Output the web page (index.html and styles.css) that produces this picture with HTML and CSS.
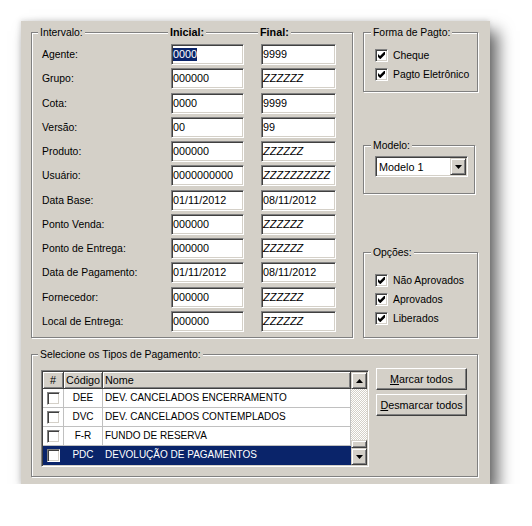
FILE: index.html
```html
<!DOCTYPE html>
<html lang="pt-BR">
<head>
    <meta charset="UTF-8">
    <meta name="viewport" content="width=device-width, initial-scale=1.0">
    <title>Filtro de Pagamentos</title>
    <link rel="stylesheet" href="styles.css">
</head>
<body>
    <div class="dialog">
        <div class="group intervalo">
            <div class="caption-row cols">
                <span class="caption">Intervalo:</span>
                <span class="caption bold">Inicial:</span>
                <span class="caption bold">Final:</span>
            </div>
            <div class="form cols">
                <label>Agente:</label>
                <div class="edit"><span class="sel">0000</span></div>
                <div class="edit">9999</div>

                <label>Grupo:</label>
                <div class="edit">000000</div>
                <div class="edit mask">ZZZZZZ</div>

                <label>Cota:</label>
                <div class="edit">0000</div>
                <div class="edit">9999</div>

                <label>Versão:</label>
                <div class="edit">00</div>
                <div class="edit">99</div>

                <label>Produto:</label>
                <div class="edit">000000</div>
                <div class="edit mask">ZZZZZZ</div>

                <label>Usuário:</label>
                <div class="edit">0000000000</div>
                <div class="edit mask">ZZZZZZZZZZ</div>

                <label>Data Base:</label>
                <div class="edit">01/11/2012</div>
                <div class="edit">08/11/2012</div>

                <label>Ponto Venda:</label>
                <div class="edit">000000</div>
                <div class="edit mask">ZZZZZZ</div>

                <label>Ponto de Entrega:</label>
                <div class="edit">000000</div>
                <div class="edit mask">ZZZZZZ</div>

                <label>Data de Pagamento:</label>
                <div class="edit">01/11/2012</div>
                <div class="edit">08/11/2012</div>

                <label>Fornecedor:</label>
                <div class="edit">000000</div>
                <div class="edit mask">ZZZZZZ</div>

                <label>Local de Entrega:</label>
                <div class="edit">000000</div>
                <div class="edit mask">ZZZZZZ</div>
            </div>
        </div>

        <div class="side">
            <div class="group forma">
                <div class="caption-row"><span class="caption">Forma de Pagto:</span></div>
                <div class="checks">
                    <div class="check-row"><span class="check"><svg width="7" height="7" viewBox="0 0 7 7"><polygon points="0,2 2,4 6,0 7,0 7,2.5 2.5,7 2,7 0,5"/></svg></span>Cheque</div>
                    <div class="check-row"><span class="check"><svg width="7" height="7" viewBox="0 0 7 7"><polygon points="0,2 2,4 6,0 7,0 7,2.5 2.5,7 2,7 0,5"/></svg></span>Pagto Eletrônico</div>
                </div>
            </div>

            <div class="group modelo">
                <div class="caption-row"><span class="caption">Modelo:</span></div>
                <div class="combo">
                    <span class="combo-text">Modelo 1</span>
                    <span class="combo-btn"><svg width="7" height="4" viewBox="0 0 7 4"><polygon points="0,0 7,0 3.5,4"/></svg></span>
                </div>
            </div>

            <div class="group opcoes">
                <div class="caption-row"><span class="caption">Opções:</span></div>
                <div class="checks">
                    <div class="check-row"><span class="check"><svg width="7" height="7" viewBox="0 0 7 7"><polygon points="0,2 2,4 6,0 7,0 7,2.5 2.5,7 2,7 0,5"/></svg></span>Não Aprovados</div>
                    <div class="check-row"><span class="check"><svg width="7" height="7" viewBox="0 0 7 7"><polygon points="0,2 2,4 6,0 7,0 7,2.5 2.5,7 2,7 0,5"/></svg></span>Aprovados</div>
                    <div class="check-row"><span class="check"><svg width="7" height="7" viewBox="0 0 7 7"><polygon points="0,2 2,4 6,0 7,0 7,2.5 2.5,7 2,7 0,5"/></svg></span>Liberados</div>
                </div>
            </div>
        </div>

        <div class="group tipos">
            <div class="caption-row"><span class="caption">Selecione os Tipos de Pagamento:</span></div>
            <div class="tipos-body">
                <div class="grid">
                    <div class="list">
                        <div class="head center">#</div>
                        <div class="head center">Código</div>
                        <div class="head">Nome</div>

                        <div class="cell center"><span class="check"></span></div>
                        <div class="cell center">DEE</div>
                        <div class="cell">DEV. CANCELADOS ENCERRAMENTO</div>

                        <div class="cell center"><span class="check"></span></div>
                        <div class="cell center">DVC</div>
                        <div class="cell">DEV. CANCELADOS CONTEMPLADOS</div>

                        <div class="cell center"><span class="check"></span></div>
                        <div class="cell center">F-R</div>
                        <div class="cell">FUNDO DE RESERVA</div>

                        <div class="cell center selected"><span class="check"></span></div>
                        <div class="cell center selected">PDC</div>
                        <div class="cell selected">DEVOLUÇÃO DE PAGAMENTOS</div>
                    </div>
                    <div class="scroll">
                        <span class="sbtn"><svg width="7" height="4" viewBox="0 0 7 4"><polygon points="3.5,0 7,4 0,4"/></svg></span>
                        <span class="thumb"></span>
                        <span class="sbtn"><svg width="7" height="4" viewBox="0 0 7 4"><polygon points="0,0 7,0 3.5,4"/></svg></span>
                    </div>
                </div>
                <div class="buttons">
                    <button><u>M</u>arcar todos</button>
                    <button><u>D</u>esmarcar todos</button>
                </div>
            </div>
        </div>
    </div>
</body>
</html>
```

FILE: styles.css
```css
* {
    box-sizing: border-box;
}

body {
    margin: 0;
    background: #fff;
    font-family: 'Liberation Sans', Arial, sans-serif;
    font-size: 10.4px;
    color: #000;
}

.dialog {
    width: 469px;
    height: 463px;
    margin: 21px 0 0 21px;
    padding: 11px 0 0 10px;
    background: #d4d0c8;
    display: grid;
    grid-template-columns: 322px 115px;
    column-gap: 10px;
    row-gap: 16px;
    align-content: start;
    box-shadow: 8px 10px 15px rgba(0,0,0,0.6), -1px -1px 5px rgba(0,0,0,0.12);
}

/* etched group box */
.group {
    border: 1px solid #808080;
    box-shadow: inset 1px 1px #fff, 1px 1px #fff;
}

.caption-row {
    height: 13px;
    margin-top: -7px;
    line-height: 13px;
}

.caption {
    display: inline-block;
    background: #d4d0c8;
    padding: 0 2px;
    margin-left: -4px;
    justify-self: start;
}

.bold {
    font-weight: bold;
    font-size: 10.8px;
    margin-left: -3px;
}

/* label column, Inicial, Final */
.cols {
    display: grid;
    grid-template-columns: 112px 73px 75px;
    column-gap: 17px;
}

.intervalo {
    height: 306px;
    padding-left: 10px;
}

.form {
    margin-top: 5px;
    grid-auto-rows: 21px;
    row-gap: 3.27px;
    align-items: center;
}

.edit {
    height: 21px;
    background: #fff;
    border: 1px solid;
    border-color: #808080 #fff #fff #808080;
    box-shadow: inset 1px 1px #404040, inset -1px -1px #d4d0c8;
    padding-left: 1px;
    font-size: 10.8px;
    line-height: 19px;
    white-space: nowrap;
    overflow: hidden;
}

.mask {
    font-style: italic;
    font-size: 11px;
}

.sel {
    display: inline-block;
    background: #0a246a;
    color: #fff;
    line-height: 13px;
}

.side {
    display: flex;
    flex-direction: column;
}

.forma, .modelo, .opcoes {
    padding-left: 11px;
}

.forma {
    height: 60px;
}

.modelo {
    width: 112px;
    height: 49px;
    margin-top: 53px;
}

.opcoes {
    height: 86px;
    margin-top: 58px;
}

.forma .checks {
    margin-top: 7px;
}

.opcoes .checks {
    margin-top: 12px;
}

.check-row {
    height: 19px;
    display: flex;
    align-items: center;
    gap: 5px;
}

.check {
    width: 13px;
    height: 13px;
    flex: none;
    background: #fff;
    border: 1px solid;
    border-color: #808080 #fff #fff #808080;
    box-shadow: inset 1px 1px #404040, inset -1px -1px #d4d0c8;
    display: inline-flex;
    align-items: center;
    justify-content: center;
}

.combo {
    width: 93px;
    height: 21px;
    margin-top: 4px;
    background: #fff;
    border: 1px solid;
    border-color: #808080 #fff #fff #808080;
    box-shadow: inset 1px 1px #404040, inset -1px -1px #d4d0c8;
    padding: 1px;
    display: flex;
    align-items: center;
}

.combo-text {
    flex: 1;
    padding-left: 2px;
    font-size: 10.8px;
}

.combo-btn, .sbtn, .thumb {
    background: #d4d0c8;
    border: 1px solid;
    border-color: #d4d0c8 #404040 #404040 #d4d0c8;
    box-shadow: inset 1px 1px #fff, inset -1px -1px #808080;
    display: flex;
    align-items: center;
    justify-content: center;
}

.combo-btn {
    width: 16px;
    height: 17px;
}

.tipos {
    grid-column: 1 / -1;
    height: 123px;
    padding-left: 9px;
}

.tipos .caption {
    margin-left: -3px;
}

.tipos-body {
    display: flex;
    gap: 7px;
    margin-top: 9px;
}

.grid {
    width: 328px;
    height: 97px;
    border: 1px solid;
    border-color: #808080 #fff #fff #808080;
    box-shadow: inset 1px 1px #404040, inset -1px -1px #d4d0c8;
    padding: 1px;
    display: flex;
}

.list {
    flex: 1;
    background: #fff;
    display: grid;
    grid-template-columns: 21px 39px 1fr;
    grid-template-rows: 17px;
    grid-auto-rows: 19px;
    font-size: 10px;
}

.head {
    background: #d4d0c8;
    border-right: 1px solid #404040;
    border-bottom: 1px solid #404040;
    box-shadow: inset 1px 1px #fff, inset -1px -1px #808080;
    font-size: 10.8px;
    line-height: 16px;
    padding-left: 2px;
}

.cell {
    border-right: 1px solid #c0c0c0;
    border-bottom: 1px solid #c0c0c0;
    line-height: 18px;
    padding-left: 2px;
    white-space: nowrap;
    overflow: hidden;
}

.center {
    text-align: center;
    padding-left: 0;
}

.cell.center {
    display: flex;
    align-items: center;
    justify-content: center;
}

.selected {
    background: #0a246a;
    color: #fff;
    border-color: #0a246a;
}

.scroll {
    width: 16px;
    display: flex;
    flex-direction: column;
    background: repeating-conic-gradient(#fff 0 25%, #d4d0c8 0 50%) 0 0 / 2px 2px;
}

.sbtn {
    height: 17px;
}

.thumb {
    height: 8px;
    margin-top: auto;
}

.buttons {
    display: flex;
    flex-direction: column;
    gap: 4px;
    margin-top: -2px;
}

button {
    width: 91px;
    height: 22px;
    padding: 0;
    background: #d4d0c8;
    border: 1px solid;
    border-color: #fff #404040 #404040 #fff;
    box-shadow: inset -1px -1px #808080;
    font-family: 'Liberation Sans', Arial, sans-serif;
    font-size: 10.8px;
    color: #000;
}
```
